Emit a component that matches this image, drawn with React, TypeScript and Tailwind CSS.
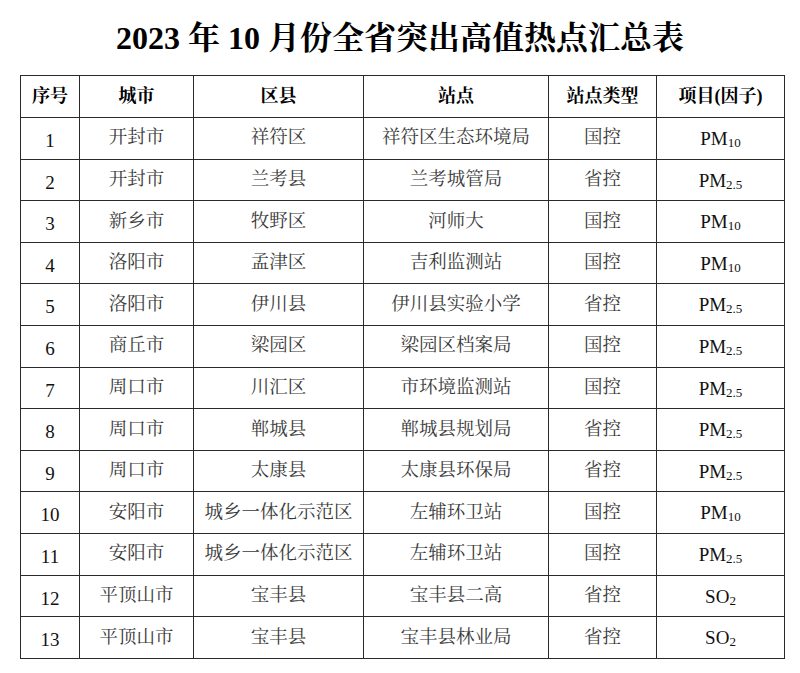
const rows = [
  ["1", "开封市", "祥符区", "祥符区生态环境局", "国控", "PM", "10"],
  ["2", "开封市", "兰考县", "兰考城管局", "省控", "PM", "2.5"],
  ["3", "新乡市", "牧野区", "河师大", "国控", "PM", "10"],
  ["4", "洛阳市", "孟津区", "吉利监测站", "国控", "PM", "10"],
  ["5", "洛阳市", "伊川县", "伊川县实验小学", "省控", "PM", "2.5"],
  ["6", "商丘市", "梁园区", "梁园区档案局", "国控", "PM", "2.5"],
  ["7", "周口市", "川汇区", "市环境监测站", "国控", "PM", "2.5"],
  ["8", "周口市", "郸城县", "郸城县规划局", "省控", "PM", "2.5"],
  ["9", "周口市", "太康县", "太康县环保局", "省控", "PM", "2.5"],
  ["10", "安阳市", "城乡一体化示范区", "左辅环卫站", "国控", "PM", "10"],
  ["11", "安阳市", "城乡一体化示范区", "左辅环卫站", "国控", "PM", "2.5"],
  ["12", "平顶山市", "宝丰县", "宝丰县二高", "省控", "SO", "2"],
  ["13", "平顶山市", "宝丰县", "宝丰县林业局", "省控", "SO", "2"],
];

const headers = ["序号", "城市", "区县", "站点", "站点类型", "项目(因子)"];
const widths = ["w-[59px]", "w-[114px]", "w-[170px]", "w-[185px]", "w-[108px]", "w-[128px]"];

const font = "font-['Liberation_Serif','Noto_Serif_CJK_SC','Noto_Sans_CJK_SC',serif]";

export default function App() {
  return (
    <div className={`w-[800px] h-[673px] bg-white ${font}`}>
      <h1 className="pt-[18px] text-center text-[32px] leading-[40px] font-bold text-black">
        2023 年 10 月份全省突出高值热点汇总表
      </h1>
      <div className="pl-[20px] mt-[17px]">
        <table className="table-fixed border-collapse w-[765px]">
          <colgroup>
            {widths.map((w, i) => (
              <col key={i} className={w} />
            ))}
          </colgroup>
          <thead>
            <tr className="h-[42px]">
              {headers.map((h) => (
                <th
                  key={h}
                  className="border border-[#2a2a2a] text-center text-[18px] font-bold text-black p-0"
                >
                  {h}
                </th>
              ))}
            </tr>
          </thead>
          <tbody>
            {rows.map((r) => (
              <tr key={r[0]} className="h-[41.6px]">
                <td className="border border-[#2a2a2a] text-center text-[19px] text-[#111] p-0 pt-[6px]">
                  {r[0]}
                </td>
                {r.slice(1, 5).map((c, i) => (
                  <td
                    key={i}
                    className="border border-[#2a2a2a] text-center text-[18.5px] text-[#3a3a3a] p-0"
                  >
                    {c}
                  </td>
                ))}
                <td className="border border-[#2a2a2a] text-center text-[19px] text-[#111] p-0 pt-[2px]">
                  {r[5]}
                  <sub className="text-[13px] bottom-[-0.15em]">{r[6]}</sub>
                </td>
              </tr>
            ))}
          </tbody>
        </table>
      </div>
    </div>
  );
}
